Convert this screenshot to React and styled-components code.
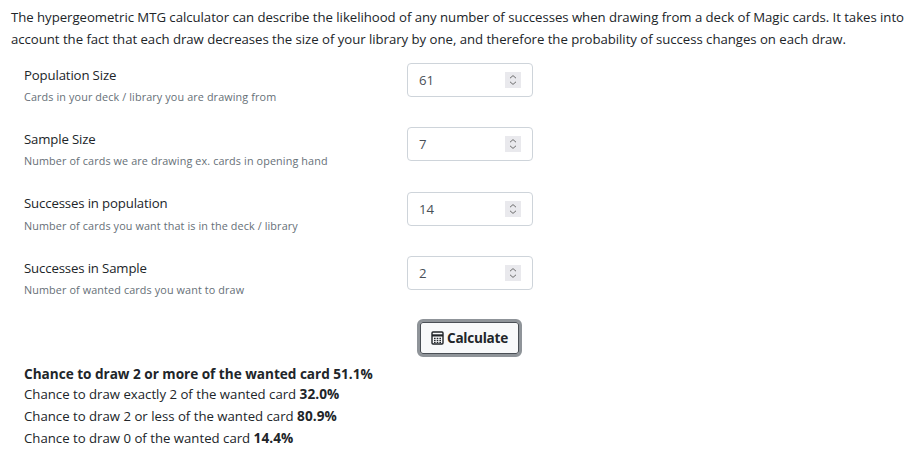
import React from 'react'
import styled, { createGlobalStyle } from 'styled-components'

const Global = createGlobalStyle`
  html, body { margin: 0; padding: 0; background: #fff; }
  body { font-family: "Open Sans", "Noto Sans", sans-serif; color: #212529; }
`

const Page = styled.div`
  width: 914px;
  height: 466px;
  padding: 7px 11px 0;
  box-sizing: border-box;
  overflow: hidden;
`

const Intro = styled.p`
  margin: 0 0 13px;
  font-size: 13.2px;
  line-height: 21.5px;
  letter-spacing: -0.035px;
  white-space: nowrap;
`

const Form = styled.div`
  display: flex;
  flex-direction: column;
  padding-left: 13px;
`

const Row = styled.div`
  display: grid;
  grid-template-columns: 383px 126px;
  height: 64.4px;
`

const Label = styled.div`
  font-size: 13.2px;
  line-height: 20px;
  letter-spacing: -0.14px;
  padding-top: 1.5px;
`

const Hint = styled.div`
  font-size: 10.8px;
  line-height: 16px;
  color: #666f77;
  margin-top: 4.5px;
  font-weight: 500;
  letter-spacing: 0.12px;
`

const Field = styled.div`
  display: flex;
  align-items: center;
  width: 126px;
  height: 34px;
  box-sizing: border-box;
  border: 1px solid #ced4da;
  border-radius: 4px;
  padding: 0 11px;
  background: #fff;
`

const NumberInput = styled.input.attrs({ type: 'number' })`
  flex: 1;
  min-width: 0;
  border: 0;
  padding: 0;
  font-family: inherit;
  font-size: 13.2px;
  color: #495057;
  background: transparent;
  outline: none;
  appearance: textfield;

  &::-webkit-inner-spin-button {
    appearance: none;
    margin: 0;
  }
`

const SpinnerIcon = styled.svg`
  flex: none;
`

const ButtonRow = styled.div`
  display: flex;
  padding-left: 406px;
  margin-top: -2px;
`

const CalcButton = styled.button`
  display: flex;
  align-items: center;
  gap: 3px;
  width: 105px;
  height: 38px;
  box-sizing: border-box;
  justify-content: center;
  padding: 0;
  background: #f8f9fa;
  color: #212529;
  border: 3px solid #8f9499;
  border-radius: 6px;
  box-shadow: inset 0 0 0 1px #4a4f55;
  font-family: inherit;
  font-size: 13.6px;
  font-weight: 700;
  letter-spacing: -0.25px;
`

const Results = styled.div`
  padding-left: 13px;
  margin-top: 6px;
`

const ResultLine = styled.div`
  font-size: ${p => (p.$strong ? '13.6px' : '13.2px')};
  line-height: 21.7px;
  letter-spacing: ${p => (p.$strong ? '-0.02px' : '0')};
  font-weight: ${p => (p.$strong ? 700 : 400)};

  b {
    font-size: 13.6px;
    line-height: 0;
    font-weight: 700;
    letter-spacing: 0.05px;
  }
`

const rows = [
  { label: 'Population Size', hint: 'Cards in your deck / library you are drawing from', value: 61 },
  { label: 'Sample Size', hint: 'Number of cards we are drawing ex. cards in opening hand', value: 7 },
  { label: 'Successes in population', hint: 'Number of cards you want that is in the deck / library', value: 14 },
  { label: 'Successes in Sample', hint: 'Number of wanted cards you want to draw', value: 2 },
]

function Spinner() {
  return (
    <SpinnerIcon width="16" height="16" viewBox="0 0 16 16" fill="none" stroke="#6d6d6d" strokeWidth="1">
      <rect width="16" height="16" fill="#e9e9ed" stroke="none" />
      <path d="M5 6.2 8 3.6 11 6.2M5 9.8 8 12.4 11 9.8" />
    </SpinnerIcon>
  )
}

function CalcIcon() {
  return (
    <svg width="13" height="14" viewBox="0 0 13 14" fill="none" stroke="#212529">
      <rect x="1" y="1" width="11" height="12" rx="1" strokeWidth="1.4" />
      <path d="M1 4.4h11" strokeWidth="2.2" />
      <path d="M3 7.4h1.6M5.7 7.4h1.6M8.4 7.4h1.6M3 9.4h1.6M5.7 9.4h1.6M8.4 9.4h1.6M3 11.4h1.6M5.7 11.4h1.6M8.4 11.4h1.6" strokeWidth="1.3" />
    </svg>
  )
}

export default function App() {
  return (
    <Page>
      <Global />
      <Intro>
        The hypergeometric MTG calculator can describe the likelihood of any number of successes when drawing from a deck of Magic cards. It takes into
        <br />
        account the fact that each draw decreases the size of your library by one, and therefore the probability of success changes on each draw.
      </Intro>
      <Form>
        {rows.map(r => (
          <Row key={r.label}>
            <div>
              <Label>{r.label}</Label>
              <Hint>{r.hint}</Hint>
            </div>
            <Field>
              <NumberInput defaultValue={r.value} />
              <Spinner />
            </Field>
          </Row>
        ))}
      </Form>
      <ButtonRow>
        <CalcButton><CalcIcon />Calculate</CalcButton>
      </ButtonRow>
      <Results>
        <ResultLine $strong>Chance to draw 2 or more of the wanted card 51.1%</ResultLine>
        <ResultLine>Chance to draw exactly 2 of the wanted card <b>32.0%</b></ResultLine>
        <ResultLine>Chance to draw 2 or less of the wanted card <b>80.9%</b></ResultLine>
        <ResultLine>Chance to draw 0 of the wanted card <b>14.4%</b></ResultLine>
      </Results>
    </Page>
  )
}
